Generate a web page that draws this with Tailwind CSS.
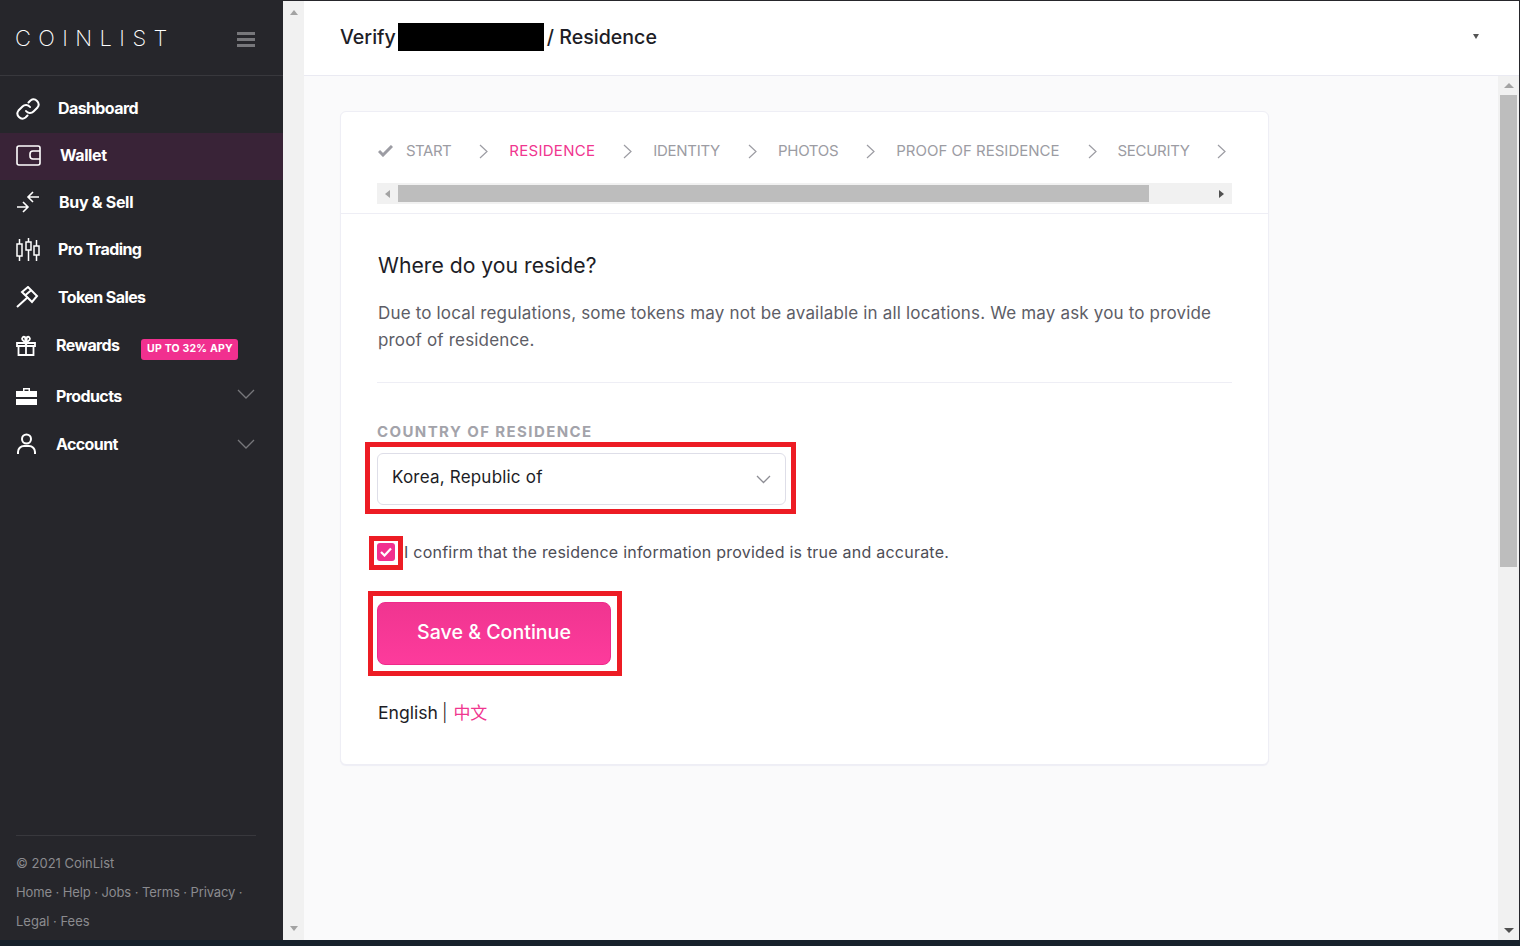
<!DOCTYPE html>
<html lang="en">
<head>
  <meta charset="UTF-8">
  <meta name="viewport" content="width=device-width, initial-scale=1.0">
  <title>CoinList - Verify</title>
  <script src="https://cdn.jsdelivr.net/npm/@tailwindcss/browser@4"></script>
</head>
<body class="h-screen overflow-hidden bg-[#17212b] font-['Inter','Noto_Sans_CJK_SC',sans-serif]">
  <div class="h-[940px] flex pt-px pr-px bg-[#26262b]">

    <!-- sidebar -->
    <aside class="w-[283px] shrink-0 flex flex-col bg-[#26262b] text-white">
      <div class="h-[75px] shrink-0 flex items-center justify-between pl-[15px] pr-[28px] border-b border-[#38383d]">
        <span class="text-[22px] font-extralight tracking-[7.4px] leading-none">COINLIST</span>
        <div class="w-[18px] mt-[2px] flex flex-col gap-[3px]">
          <div class="h-[3px] bg-[#77777b]"></div>
          <div class="h-[3px] bg-[#77777b]"></div>
          <div class="h-[3px] bg-[#77777b]"></div>
        </div>
      </div>
      <nav class="pt-[9px] flex flex-col text-[16px] font-bold tracking-[-0.6px]">
        <a class="h-[48px] flex items-center pl-[16px]">
          <svg class="w-[24px] h-[24px] mr-[18px]" viewBox="0 0 24 24" fill="none" stroke="white" stroke-width="2" stroke-linecap="round"><path d="M10 14a5 5 0 0 0 7.500.5l4-4a5 5 0 0 0-7-7l-2 2"/><path d="M14 10a5 5 0 0 0-7.500-.5l-4 4a5 5 0 0 0 7 7l2-2"/></svg>
          <span class="mb-[2px]">Dashboard</span></a>
        <a class="h-[47px] flex items-center pl-[16px] bg-[#392337]">
          <svg class="w-[25px] h-[21px] mr-[19px] mb-[2px]" viewBox="0 0 25 21" fill="none" stroke="white" stroke-width="1.6"><rect x="1" y="1" width="23" height="19" rx="2"/><path d="M24 6h-7a3 3 0 0 0-3 3v2a3 3 0 0 0 3 3h7"/></svg>
          <span class="mb-[3px] tracking-[-0.4px]">Wallet</span></a>
        <a class="h-[46px] flex items-center pl-[16px]">
          <svg class="w-[24px] h-[22px] mr-[19px] mb-[2px]" viewBox="0 0 24 22" fill="none" stroke="white" stroke-width="1.6"><path d="M1 16h11M7 11l5 5-5 5M23 6H12M17 1l-5 5 5 5"/></svg>
          <span class="mb-[2px] tracking-[-0.3px]">Buy &amp; Sell</span></a>
        <a class="h-[47px] flex items-center pl-[16px]">
          <svg class="w-[24px] h-[24px] mr-[18px]" viewBox="0 0 24 24" fill="none" stroke="white" stroke-width="1.5"><rect x="1" y="6" width="5" height="12"/><path d="M3.500 1v5M3.500 18v5"/><rect x="10" y="4" width="5" height="8"/><path d="M12.500 0v4M12.500 12v11"/><rect x="18" y="8" width="5" height="9"/><path d="M20.500 2v6M20.500 17v6"/></svg>
          <span class="mb-[2px]">Pro Trading</span></a>
        <a class="h-[48px] flex items-center pl-[16px]">
          <svg class="w-[24px] h-[22px] mr-[18px]" viewBox="0 0 24 22" fill="none" stroke="white" stroke-width="2"><path d="M1 21l11-10"/><path d="M6 6l6-5 9 9-5 6z"/><path d="M9.500 9l6-5"/></svg>
          Token Sales</a>
        <a class="h-[51px] flex items-center pl-[16px] pb-[3px]">
          <svg class="w-[20px] h-[21px] mr-[20px]" viewBox="0 0 20 21" fill="none" stroke="white" stroke-width="1.8"><path d="M1 8h18v3H1zM2.500 11v9h15v-9zM10 8v12M10 8L6.500 5a2 2 0 0 1 2.500-3zM10 8l3.500-3a2 2 0 0 0-2.500-3z"/></svg>
          Rewards
          <span class="ml-[22px] mt-[8px] h-[21px] w-[97px] flex items-center justify-center rounded-[3px] bg-[#f1308f] text-[10.5px] font-bold tracking-[0.2px]">UP TO 32% APY</span>
        </a>
        <a class="h-[48px] flex items-center pl-[16px]">
          <svg class="w-[21px] h-[17px] mr-[19px]" viewBox="0 0 21 17" fill="white"><path d="M7 0h7v3h7v6H0V3h7zM8.500 1.500v1.500h4V1.500zM0 11h21v6H0z"/></svg>
          Products
          <svg class="ml-auto mr-[28px] mb-[4px] w-[18px] h-[10px]" viewBox="0 0 18 10" fill="none" stroke="#77777b" stroke-width="1.3"><path d="M1 1l8 8 8-8"/></svg>
        </a>
        <a class="h-[48px] flex items-center pl-[17px]">
          <svg class="w-[19px] h-[22px] mr-[20px]" viewBox="0 0 19 22" fill="none" stroke="white" stroke-width="2"><circle cx="9.500" cy="6" r="4.500"/><path d="M1 21v-2a6 6 0 0 1 6-6h5a6 6 0 0 1 6 6v2"/></svg>
          Account
          <svg class="ml-auto mr-[28px] w-[18px] h-[10px]" viewBox="0 0 18 10" fill="none" stroke="#77777b" stroke-width="1.3"><path d="M1 1l8 8 8-8"/></svg>
        </a>
      </nav>
      <footer class="mt-auto mx-[16px] mr-[27px] pt-[13px] pb-[4px] border-t border-[#38383d] text-[13px] leading-[29px] text-[#8b8b8f]">
        <p>© 2021 CoinList</p>
        <p class="tracking-[-0.1px]">Home · Help · Jobs · Terms · Privacy ·</p>
        <p>Legal · Fees</p>
      </footer>
    </aside>

    <!-- left scrollbar -->
    <div class="w-[21px] shrink-0 bg-[#f1f1f1] flex flex-col justify-between items-center py-[9px]">
      <div class="border-x-[4px] border-x-transparent border-b-[5px] border-b-[#a3a3a3]"></div>
      <div class="border-x-[4px] border-x-transparent border-t-[5px] border-t-[#a3a3a3]"></div>
    </div>

    <main class="flex-1 min-w-0 flex flex-col bg-white">
      <header class="h-[75px] shrink-0 flex items-center pl-[36px] pr-[40px] pb-[2px] border-b border-[#eaeaf2] text-[19.6px] font-medium text-[#1d1d26]">
        <span class="mt-[2px]">Verify</span>
        <span class="w-[146px] h-[28px] bg-black ml-[2px] mr-[3px]"></span>
        <span class="mt-[2px]">/ Residence</span>
        <span class="ml-auto mb-[2px] border-x-[3px] border-x-transparent border-t-[5px] border-t-[#555]"></span>
      </header>

      <div class="flex-1 min-h-0 flex bg-[#fafafb]">
        <div class="flex-1 pl-[36px] pt-[35px]">
          <!-- card -->
          <section class="relative w-[929px] h-[654px] rounded-[6px] border border-[#eeeef5] bg-white shadow-[0_1px_1px_#eeeef5]">
            <div class="h-[102px] border-b border-[#eeeef5] px-[36px] pt-[29px]">
              <div class="flex items-center pl-px whitespace-nowrap text-[15px] text-[#9c9ca3] h-[20px] tracking-[-0.3px]">
                <svg class="w-[15px] h-[12px] mr-[13px]" viewBox="0 0 15 12" fill="none" stroke="#9c9ca3" stroke-width="3"><path d="M1 6l4 4 9-9"/></svg>
                <span class="tracking-[-0.5px]">START</span>
                <svg class="w-[9px] h-[15px] ml-[28px] mr-[21px]" viewBox="0 0 9 15" fill="none" stroke="#9c9ca3" stroke-width="1.2"><path d="M1 1l7 6.500-7 6.500"/></svg>
                <span class="text-[#f0368f] tracking-[0.3px]">RESIDENCE</span>
                <svg class="w-[9px] h-[15px] ml-[28px] mr-[21px]" viewBox="0 0 9 15" fill="none" stroke="#9c9ca3" stroke-width="1.2"><path d="M1 1l7 6.500-7 6.500"/></svg>
                <span>IDENTITY</span>
                <svg class="w-[9px] h-[15px] ml-[28px] mr-[21px]" viewBox="0 0 9 15" fill="none" stroke="#9c9ca3" stroke-width="1.2"><path d="M1 1l7 6.500-7 6.500"/></svg>
                <span>PHOTOS</span>
                <svg class="w-[9px] h-[15px] ml-[28px] mr-[21px]" viewBox="0 0 9 15" fill="none" stroke="#9c9ca3" stroke-width="1.2"><path d="M1 1l7 6.500-7 6.500"/></svg>
                <span class="tracking-[0px]">PROOF OF RESIDENCE</span>
                <svg class="w-[9px] h-[15px] ml-[28px] mr-[21px]" viewBox="0 0 9 15" fill="none" stroke="#9c9ca3" stroke-width="1.2"><path d="M1 1l7 6.500-7 6.500"/></svg>
                <span>SECURITY</span>
                <svg class="w-[9px] h-[15px] ml-[27px]" viewBox="0 0 9 15" fill="none" stroke="#9c9ca3" stroke-width="1.2"><path d="M1 1l7 6.500-7 6.500"/></svg>
              </div>
              <div class="mt-[22px] h-[21px] flex items-center bg-[#f1f1f1] py-[2px]">
                <div class="w-[21px] flex justify-center"><div class="border-y-[4px] border-y-transparent border-r-[5px] border-r-[#a3a3a3]"></div></div>
                <div class="w-[751px] h-full bg-[#bdbdbd]"></div>
                <div class="flex-1 flex justify-end pr-[8px]"><div class="border-y-[4px] border-y-transparent border-l-[5px] border-l-[#505050]"></div></div>
              </div>
            </div>

            <div class="px-[36px]">
              <h1 class="mt-[37px] pl-px text-[21.2px] leading-[28px] text-[#1d1d26]">Where do you reside?</h1>
              <p class="mt-[21px] pl-px pb-[28px] border-b border-[#eeeef5] text-[17px] tracking-[0.17px] leading-[27px] text-[#5d5d66]">Due to local regulations, some tokens may not be available in all locations. We may ask you to provide proof of residence.</p>
              <label class="block mt-[40px] text-[15px] leading-[18px] font-bold tracking-[1.4px] text-[#a3a3aa]">COUNTRY OF RESIDENCE</label>
              <div class="mt-[12px] w-[409px] h-[52px] flex items-center justify-between pl-[14px] pr-[14px] rounded-[6px] border border-[#dedee8] text-[17px] tracking-[0.2px] text-[#1d1d26]">
                <span class="mb-[3px]">Korea, Republic of</span>
                <svg class="w-[15px] h-[9px]" viewBox="0 0 15 9" fill="none" stroke="#8d8d94" stroke-width="1.3"><path d="M1 1l6.500 6.500L14 1"/></svg>
              </div>
              <div class="mt-[37px] flex items-center h-[20px] text-[16px] tracking-[0.23px] text-[#4d4d56]">
                <span class="w-[18px] h-[18px] flex items-center justify-center rounded-[3px] bg-[#f1308f]">
                  <svg class="w-[12px] h-[10px]" viewBox="0 0 12 10" fill="none" stroke="white" stroke-width="2.200"><path d="M1 5l3.500 3.500L11 1.500"/></svg>
                </span>
                <span class="ml-[9px]">I confirm that the residence information provided is true and accurate.</span>
              </div>
              <button class="block mt-[40px] w-[234px] h-[63px] pb-[1px] rounded-[8px] border border-[#ee2a8a] bg-gradient-to-b from-[#f03590] to-[#fd3b9c] text-white text-[19.6px] font-medium">Save &amp; Continue</button>
              <p class="mt-[36px] pl-px text-[17.6px] leading-[24px] text-[#1d1d26]">English <span class="-ml-[1px] font-light">|</span> <span class="ml-[1px] text-[17px] text-[#f0368f]">中文</span></p>
            </div>

            <!-- red annotation boxes -->
            <div class="absolute left-[24px] top-[330px] w-[431px] h-[72px] border-[5px] border-[#ed1c24]"></div>
            <div class="absolute left-[28px] top-[424px] w-[34px] h-[34px] border-[5px] border-[#ed1c24]"></div>
            <div class="absolute left-[27px] top-[479px] w-[254px] h-[85px] border-[5px] border-[#ed1c24]"></div>
          </section>
        </div>

        <!-- page scrollbar -->
        <div class="w-[21px] shrink-0 flex flex-col items-center bg-[#f1f1f1]">
          <div class="h-[19px] flex items-center"><div class="border-x-[5px] border-x-transparent border-b-[5px] border-b-[#a3a3a3]"></div></div>
          <div class="w-[17px] h-[472px] bg-[#bdbdbd]"></div>
          <div class="mt-auto h-[20px] flex items-center"><div class="border-x-[5px] border-x-transparent border-t-[5px] border-t-[#505050]"></div></div>
        </div>
      </div>
    </main>
  </div>
</body>
</html>
